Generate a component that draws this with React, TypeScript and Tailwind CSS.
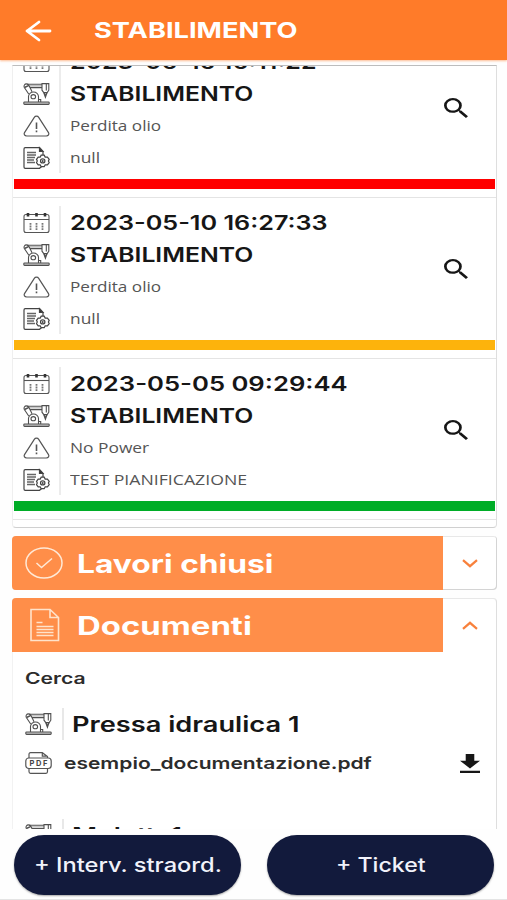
import { useLayoutEffect, useRef, useState } from "react";
import type { ReactNode } from "react";

type WideTextProps = { width: number; className?: string; children: ReactNode };

/* One line of text stretched horizontally so that it spans `width` pixels. */
function WideText({ width, className = "", children }: WideTextProps) {
  const ref = useRef<HTMLSpanElement>(null);
  const [scale, setScale] = useState(1);
  useLayoutEffect(() => {
    if (ref.current) setScale(width / ref.current.offsetWidth);
  }, [width]);
  return (
    <span className="block shrink-0 text-left whitespace-nowrap" style={{ width }}>
      <span
        ref={ref}
        className={`inline-block origin-left align-top ${className}`}
        style={{ transform: `scaleX(${scale})` }}
      >
        {children}
      </span>
    </span>
  );
}

const iconClass = "block h-[22px] w-[27px] shrink-0 overflow-visible";

function CalendarIcon() {
  return (
    <svg viewBox="0 0 27 22" className={iconClass} fill="none" stroke="#555" strokeWidth="1.1">
      <rect x="1" y="2.500" width="25" height="18" rx="2" />
      <path d="M1 7.500h25" />
      <path d="M5 1v3.500M13.500 1v3.500M22 1v3.500" stroke="#333" strokeWidth="2.6" />
      <path d="M7.500 11v7M13.500 11v7M19.500 11v7" strokeWidth="1.800" strokeDasharray="1.8 0.8" stroke="#777" />
    </svg>
  );
}

function RobotIcon() {
  return (
    <svg viewBox="0 0 27 22" className={iconClass} fill="none" stroke="#505050" strokeWidth="1.1">
      <rect x="0.800" y="19" width="25.400" height="2.400" rx="0.800" fill="#c4c4c4" />
      <path d="M5.500 19v-5.500a5 4.500 0 0 1 10 0V19" />
      <ellipse cx="10.300" cy="13.700" rx="2.300" ry="2.100" />
      <path d="M5.700 11 1.200 4.200C.6 2.600 1.600.9 3.400.9c1.300 0 2.200.7 2.800 1.800L9 8.800" />
      <path d="M1.500 4.500 6 2.300" strokeWidth="1.400" />
      <path d="M4 1.200h15M6.800 4.600H19" />
      <path d="M7 2.900h12" stroke="#aaa" />
      <path d="M19 .6h6.800v6.600l-1.600 2.400h-3.400L19 7.200zM23.300.6v6.800" />
      <path d="M21 9.800 22.400 13.800l1.400-4" strokeWidth="1.500" />
      <path d="M15.500 16.500h2.200V19" />
    </svg>
  );
}

function WarningIcon() {
  return (
    <svg viewBox="0 0 27 22" className={iconClass} fill="none" stroke="#555" strokeWidth="1.200">
      <path d="M11.300 2.400c1-1.600 3.400-1.600 4.400 0l9.800 15.200c1 1.600-.2 3.400-2.200 3.400H3.700c-2 0-3.200-1.800-2.200-3.400z" />
      <path d="M13.500 7.500v6.500M13.500 15.500v1.800" strokeWidth="1.600" />
    </svg>
  );
}

function ReportIcon() {
  return (
    <svg viewBox="0 0 27 22" className={iconClass} fill="none" stroke="#444" strokeWidth="1.200">
      <path d="M20 8V4.500L16.500.7H2.200C1.500.7 1 1.200 1 2v18c0 .8.5 1.300 1.200 1.300H16.500l2.500-2" />
      <path d="M16.500.7v3.800H20z" fill="#333" />
      <path d="M4 5.500h9M4 8h9M4 10.500h8M4 13h7M4 15.500h8" strokeWidth="1.300" stroke="#666" />
      <path d="m18.200 8.200h3l1 1.900h2.200l1.800 2.200-.8 1.600.8 1.700-1.800 2.200h-2.200l-1 1.900h-3l-1-1.900h-2l-1.700-2.200.8-1.700-.8-1.600 1.700-2.200h2z" fill="#fff" />
      <ellipse cx="19.700" cy="13.900" rx="2.200" ry="2" />
      <circle cx="19.700" cy="13.900" r="0.400" />
    </svg>
  );
}

function PdfIcon() {
  return (
    <svg viewBox="0 0 27 22" className={iconClass} fill="none" stroke="#555" strokeWidth="1.200">
      <path d="M4 6V2.300C4 1.300 4.600.7 5.500.7h11.800L22.500 4.500V6M17.300.7v3.500h5" />
      <rect x="0.800" y="6" width="25.400" height="10.500" rx="3" />
      <path d="M4 16.500v3c0 1.200.6 1.800 1.500 1.800H21c1 0 1.500-.6 1.500-1.800v-3" />
      <text x="13.500" y="14" textAnchor="middle" textLength="18" fontSize="7.500" fontWeight="700" fill="#444" stroke="none" fontFamily="Inter, sans-serif">
        PDF
      </text>
    </svg>
  );
}

function SearchIcon() {
  return (
    <svg viewBox="3 3 17.500 17.500" preserveAspectRatio="none" className="block h-5 w-6" fill="#161616">
      <path d="M15.500 14h-.79l-.28-.27A6.471 6.471 0 0 0 16 9.500 6.500 6.500 0 1 0 9.500 16c1.610 0 3.090-.59 4.230-1.570l.27.28v.79l5 4.990L20.490 19l-4.990-5zm-6 0C7.010 14 5 11.990 5 9.500S7.010 5 9.500 5 14 7.010 14 9.500 11.990 14 9.500 14z" />
    </svg>
  );
}

type Job = { date: string; dateWidth: number; issue: string; issueWidth: number; note: string; noteWidth: number; bar: string };

const jobs: Job[] = [
  { date: "2023-06-16 16:11:22", dateWidth: 247, issue: "Perdita olio", issueWidth: 91, note: "null", noteWidth: 30, bar: "bg-[#ff0000]" },
  { date: "2023-05-10 16:27:33", dateWidth: 258, issue: "Perdita olio", issueWidth: 91, note: "null", noteWidth: 30, bar: "bg-[#fdb30c]" },
  { date: "2023-05-05 09:29:44", dateWidth: 278, issue: "No Power", issueWidth: 79, note: "TEST PIANIFICAZIONE", noteWidth: 177, bar: "bg-[#00ad27]" },
];

const strong = "text-[20px] leading-8 font-semibold text-[#161616]";
const light = "font-['Open_Sans'] text-[14.5px] leading-8 text-[#555]";

function JobCard({ job }: { job: Job }) {
  return (
    <article className="h-[161px] border-t border-[#e4e4e4] pt-2">
      <div className="flex h-32 items-center">
        <div className="flex h-full w-[48px] flex-col items-start justify-between border-r-2 border-[#ececec] pt-[6px] pb-[4px] pl-[10px]">
          <CalendarIcon />
          <RobotIcon />
          <WarningIcon />
          <ReportIcon />
        </div>
        <div className="flex-1 pt-0.5 pl-[9px]">
          <WideText width={job.dateWidth} className={strong}>{job.date}</WideText>
          <WideText width={183} className={strong}>STABILIMENTO</WideText>
          <WideText width={job.issueWidth} className={light}>{job.issue}</WideText>
          <WideText width={job.noteWidth} className={light}>{job.note}</WideText>
        </div>
        <div className="mr-7 mb-[2px]">
          <SearchIcon />
        </div>
      </div>
      <div className={`mt-1.5 mr-px ml-px h-[10px] ${job.bar}`} />
    </article>
  );
}

function AccordionHeader({ icon, title, width, open }: { icon: ReactNode; title: string; width: number; open: boolean }) {
  return (
    <div className="flex h-[54px]">
      <div className={`flex w-[431px] items-center bg-[#ff8e49] pl-[13px] ${open ? "rounded-tl" : "rounded-l"}`}>
        <div className="w-[52px]">{icon}</div>
        <WideText width={width} className="pt-px text-[25px] leading-[54px] font-bold text-white">{title}</WideText>
      </div>
      <div className="flex flex-1 items-center justify-center">
        <svg viewBox="0 0 16 9" className="block h-[9px] w-4" fill="none" stroke="#f8813c" strokeWidth="2.200">
          {open ? <path d="m1 7.800 7-6 7 6" /> : <path d="m1 1.200 7 6 7-6" />}
        </svg>
      </div>
    </div>
  );
}

function MachineRow({ name, width }: { name: string; width: number }) {
  return (
    <div className="flex h-8 items-center">
      <div className="flex h-full w-[39px] items-center border-r-2 border-[#e8e8e8]">
        <RobotIcon />
      </div>
      <div className="pt-0.5 pl-2">
        <WideText width={width} className="text-[21px] leading-8 font-semibold text-[#161616]">{name}</WideText>
      </div>
    </div>
  );
}

export default function App() {
  return (
    <div className="flex h-[900px] w-[507px] flex-col overflow-hidden bg-[#fefefe] font-[Inter,sans-serif]">
      <header className="flex h-[60px] shrink-0 items-center bg-[#ff7b29] pl-[25px] shadow-[0_1px_2px_rgba(255,123,41,0.5)]">
        <svg viewBox="0 0 27 22" className="mt-px mr-[42px] block h-[22px] w-[27px]" fill="none" stroke="#fff" strokeWidth="2.800" strokeLinecap="round" strokeLinejoin="round">
          <path d="M25 11H2M14 2 2 11l12 9" />
        </svg>
        <WideText width={203} className="text-[22px] leading-[60px] font-bold text-white">STABILIMENTO</WideText>
      </header>

      <main className="mt-[5px] ml-3 flex h-[764px] w-[485px] shrink-0 flex-col gap-2 overflow-hidden">
        <section className="h-[463px] shrink-0 overflow-hidden rounded-b border border-[#dedede] border-t-[#bdbdbd] border-b-[#d0d0d0] border-l-[#efefef] bg-white">
          <div className="-mt-[30px]">
            {jobs.map((job) => (
              <JobCard key={job.date} job={job} />
            ))}
            <div className="border-t border-[#e4e4e4]" />
          </div>
        </section>

        <section className="h-[54px] shrink-0 rounded bg-white shadow-[inset_-1px_-1px_0_#d4d4d4,inset_0_1px_0_#e8e8e8]">
          <AccordionHeader
            title="Lavori chiusi"
            width={197}
            open={false}
            icon={
              <svg viewBox="0 0 38 32" className="block h-8 w-[38px]" fill="none" stroke="#ffe9d6" strokeWidth="1.500">
                <ellipse cx="19" cy="16" rx="18" ry="15" />
                <path d="m11.500 16 5 4.500 10.500-9" />
              </svg>
            }
          />
        </section>

        <section className="h-[260px] shrink-0 rounded-t border-r border-[#dedede] bg-white shadow-[inset_0_1px_0_#e8e8e8,inset_1px_0_0_#f2f2f2]">
          <AccordionHeader
            title="Documenti"
            width={175}
            open
            icon={
              <svg viewBox="0 0 30 34" className="ml-[5px] block h-[34px] w-[30px]" fill="none" stroke="#ffe3cb" strokeWidth="1.600">
                <path d="M1 1.500H20l8.500 8V32.500H1zM20 1.500v8h8.500" />
                <path d="M6.500 14.500h6M6.500 18.500h17M6.500 21.500h17M6.500 24.500h17M6.500 27.500h17" />
              </svg>
            }
          />
          <div className="pl-[13px]">
            <div className="pt-[11px]">
              <WideText width={60} className="text-[15.5px] leading-8 font-semibold text-[#2c2c2c]">Cerca</WideText>
            </div>
            <div className="mt-[13px]">
              <MachineRow name="Pressa idraulica 1" width={228} />
            </div>
            <div className="mt-[7px] flex h-8 items-center">
              <PdfIcon />
              <div className="ml-3 flex-1">
                <WideText width={308} className="text-[16.500px] leading-8 font-semibold text-[#2c2c2c]">esempio_documentazione.pdf</WideText>
              </div>
              <svg viewBox="5 3 14 17" preserveAspectRatio="none" className="mr-4 block h-[19px] w-5" fill="#161616">
                <path d="M19 9h-4V3H9v6H5l7 7 7-7zM5 18v2h14v-2H5z" />
              </svg>
            </div>
            <div className="mt-10">
              <MachineRow name="Muletto1" width={110} />
            </div>
          </div>
        </section>
      </main>

      <footer className="flex h-[71px] shrink-0 items-start gap-[26px] border-b border-[#e4e4e4] pt-[5.500px] pl-[14px]">
        <button className="flex h-[60px] w-[227px] items-center justify-center rounded-full bg-[#121a3c] shadow-[0_1px_2px_rgba(0,0,0,0.35)]">
          <WideText width={188} className="text-[20px] leading-[60px] font-medium text-[#f1f2fa]">+ Interv. straord.</WideText>
        </button>
        <button className="flex h-[60px] w-[227px] items-center justify-center rounded-full bg-[#121a3c] shadow-[0_1px_2px_rgba(0,0,0,0.35)]">
          <WideText width={90} className="text-[20px] leading-[60px] font-medium text-[#f1f2fa]">+ Ticket</WideText>
        </button>
      </footer>
    </div>
  );
}
